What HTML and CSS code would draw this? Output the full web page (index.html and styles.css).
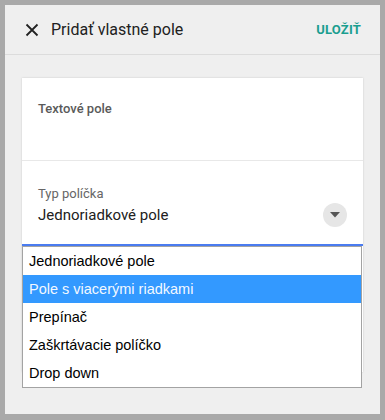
FILE: index.html
```html
<!DOCTYPE html>
<html>
<head>
<meta charset="utf-8">
<link rel="stylesheet" href="styles.css">
</head>
<body>
<div class="panel">
  <header class="bar">
    <svg class="close" width="14" height="14" viewBox="0 0 14 14"><path d="M1.5 1.5 L12.5 12.5 M12.5 1.5 L1.5 12.5" stroke="#222" stroke-width="1.8" fill="none"/></svg>
    <span class="title">Pridať vlastné pole</span>
    <span class="save">ULOŽIŤ</span>
  </header>
  <main class="content">
    <div class="card">
      <div class="sec1"><span class="label1">Textové pole</span></div>
      <div class="sec2">
        <div class="label2">Typ políčka</div>
        <div class="select">
          <div class="row">
            <span class="value">Jednoriadkové pole</span>
            <span class="btn"><svg width="10" height="6" viewBox="0 0 10 6"><path d="M0 0 H10 L5 5.5 Z" fill="#555"/></svg></span>
          </div>
          <div class="underline"></div>
          <ul class="list">
            <li>Jednoriadkové pole</li>
            <li class="sel">Pole s viacerými riadkami</li>
            <li>Prepínač</li>
            <li>Zaškrtávacie políčko</li>
            <li>Drop down</li>
          </ul>
        </div>
      </div>
    </div>
  </main>
</div>
</body>
</html>
```
FILE: styles.css
```css
html, body { margin: 0; padding: 0; }
body {
  background: #a9a9a9;
  padding: 5px 5px 6px 5px;
  font-family: Roboto, "Noto Sans", sans-serif;
}
.panel {
  background: #efefef;
  height: 409px;
  display: flex;
  flex-direction: column;
}
.bar {
  height: 50px;
  border-bottom: 1px solid #dcdcdc;
  display: flex;
  align-items: center;
  padding: 0 19px 0 20px;
  box-sizing: border-box;
}
.close { margin-left: 0; margin-right: 12px; }
.title { font-size: 16px; color: #212121; flex: 1; }
.save { font-size: 13px; font-weight: 700; color: #1a9e8f; letter-spacing: 0.2px; }
.content { padding: 23px 17px 0 17px; }
.card {
  background: #fff;
  height: 294px;
  box-shadow: 0 0 2px rgba(0,0,0,0.15);
}
.sec1 {
  height: 83px;
  border-bottom: 1px solid #e8e8e8;
  padding: 23px 16px 0;
  box-sizing: border-box;
}
.label1 { font-size: 13px; font-weight: 500; color: #5a5a5a; line-height: 16px; display: block; }
.sec2 { padding: 25px 0 0 16px; }
.label2 { font-size: 13px; color: #666; line-height: 16px; margin-bottom: 1px; }
.select { position: relative; }
.row {
  display: flex;
  align-items: center;
  justify-content: space-between;
  height: 24px;
  padding-right: 16px;
  margin-bottom: 17px;
}
.value { font-size: 15px; color: #212121; }
.btn {
  width: 24px; height: 24px;
  border-radius: 50%;
  background: #e6e6e6;
  display: flex; align-items: center; justify-content: center;
}
.underline { height: 2px; background: #4a7cf0; margin-left: -16px; }
.list {
  position: absolute;
  left: -16px;
  top: 43px;
  width: 340px;
  box-sizing: border-box;
  margin: 0; padding: 0;
  list-style: none;
  background: #fff;
  border: 1px solid #a3a3a3;
  font-family: "Liberation Sans", Arial, sans-serif;
  font-size: 14.5px;
  color: #000;
}
.list li { height: 28px; line-height: 28px; padding-left: 6px; }
.list li.sel { background: #3399ff; color: #f2f8ff; }
```
